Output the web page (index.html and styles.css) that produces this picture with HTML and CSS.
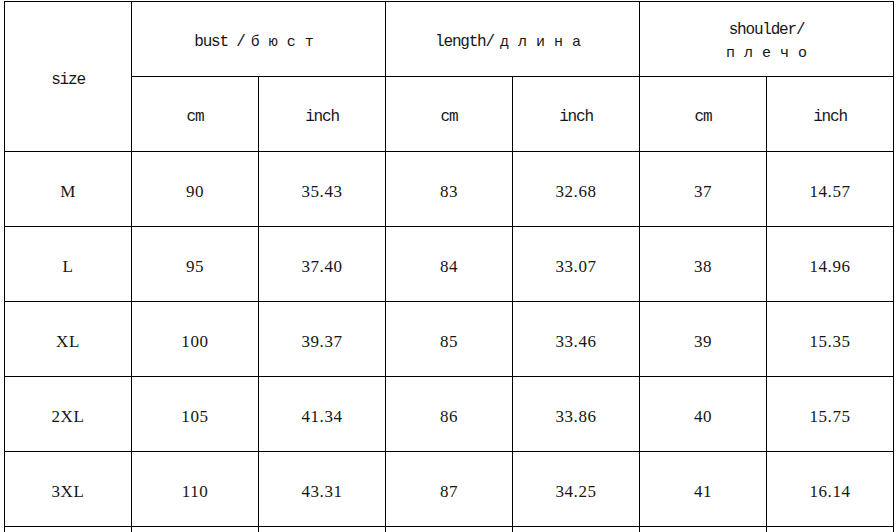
FILE: index.html
```html
<!DOCTYPE html>
<html lang="en">
<head>
<meta charset="utf-8">
<title>Size chart</title>
<link rel="stylesheet" href="styles.css">
</head>
<body>
<div class="chart" role="table" aria-label="Size chart">
  <div class="cell head size-head" role="columnheader">size</div>
  <div class="cell head span2" role="columnheader">bust /<span class="cy">бюст</span></div>
  <div class="cell head span2" role="columnheader">length/<span class="cy">длина</span></div>
  <div class="cell head span2 stack" role="columnheader"><span>shoulder/</span><span class="cy">плечо</span></div>

  <div class="cell head" role="columnheader">cm</div>
  <div class="cell head" role="columnheader">inch</div>
  <div class="cell head" role="columnheader">cm</div>
  <div class="cell head" role="columnheader">inch</div>
  <div class="cell head" role="columnheader">cm</div>
  <div class="cell head" role="columnheader">inch</div>

  <div class="cell num" role="rowheader">M</div>
  <div class="cell num">90</div>
  <div class="cell num">35.43</div>
  <div class="cell num">83</div>
  <div class="cell num">32.68</div>
  <div class="cell num">37</div>
  <div class="cell num">14.57</div>

  <div class="cell num" role="rowheader">L</div>
  <div class="cell num">95</div>
  <div class="cell num">37.40</div>
  <div class="cell num">84</div>
  <div class="cell num">33.07</div>
  <div class="cell num">38</div>
  <div class="cell num">14.96</div>

  <div class="cell num" role="rowheader">XL</div>
  <div class="cell num">100</div>
  <div class="cell num">39.37</div>
  <div class="cell num">85</div>
  <div class="cell num">33.46</div>
  <div class="cell num">39</div>
  <div class="cell num">15.35</div>

  <div class="cell num" role="rowheader">2XL</div>
  <div class="cell num">105</div>
  <div class="cell num">41.34</div>
  <div class="cell num">86</div>
  <div class="cell num">33.86</div>
  <div class="cell num">40</div>
  <div class="cell num">15.75</div>

  <div class="cell num" role="rowheader">3XL</div>
  <div class="cell num">110</div>
  <div class="cell num">43.31</div>
  <div class="cell num">87</div>
  <div class="cell num">34.25</div>
  <div class="cell num">41</div>
  <div class="cell num">16.14</div>

  <div class="cell"></div>
  <div class="cell"></div>
  <div class="cell"></div>
  <div class="cell"></div>
  <div class="cell"></div>
  <div class="cell"></div>
  <div class="cell"></div>
</div>
</body>
</html>
```
FILE: styles.css
```css
html, body {
  margin: 0;
  padding: 0;
  height: 532px;
  overflow: hidden;
}

body {
  background-color: #fff;
  background-image: repeating-linear-gradient(to bottom, transparent 0, transparent 75px, #cfcfcf 75px, #cfcfcf 76px);
  background-position: 0 1px;
  background-size: 4px 75px;
  background-repeat: repeat-y;
  color: #161616;
}

.chart {
  display: grid;
  grid-template-columns: repeat(7, 126px);
  grid-template-rows: repeat(7, 74px) 5px;
  gap: 1px;
  padding: 1px 1px 0 1px;
  margin: 1px 0 0 4px;
  width: max-content;
  background: #000;
}

.cell {
  background: #fff;
  display: flex;
  align-items: center;
  justify-content: center;
  padding-top: 6px;
  box-sizing: border-box;
  overflow: hidden;
  white-space: nowrap;
}

.head {
  font-family: "Liberation Mono", monospace;
  font-size: 16px;
  letter-spacing: -1.2px;
}

.size-head {
  grid-row: span 2;
}

.span2 {
  grid-column: span 2;
}

.stack {
  flex-direction: column;
  line-height: 23px;
}

.cy {
  letter-spacing: 9px;
  margin-left: 6px;
  font-size: 15px;
}

.stack .cy {
  margin-left: 9px;
}

.num {
  font-family: "Liberation Serif", serif;
  font-size: 17px;
  letter-spacing: 0.6px;
}
```
